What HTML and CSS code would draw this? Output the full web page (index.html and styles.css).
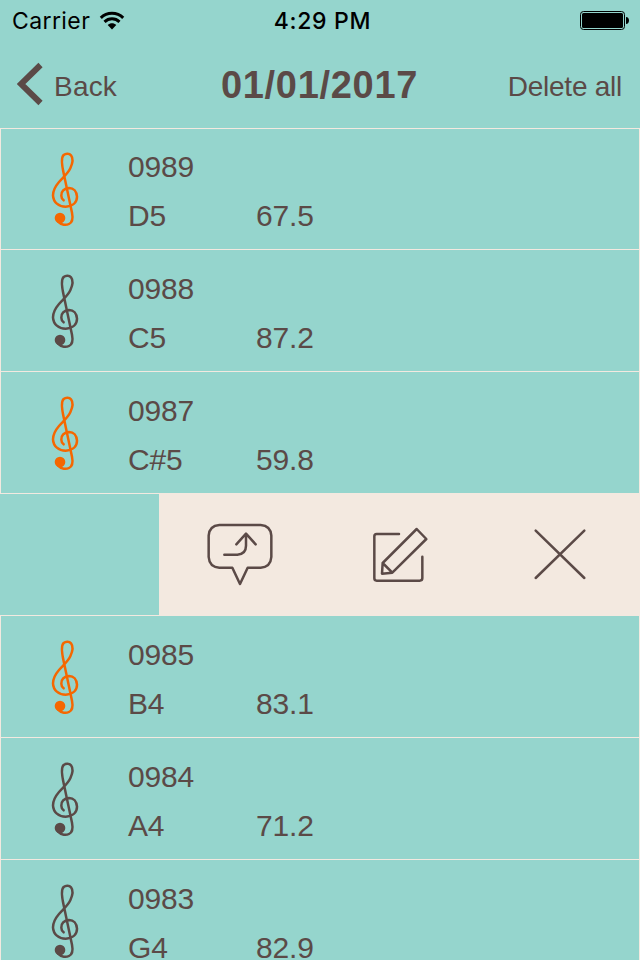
FILE: index.html
```html
<!DOCTYPE html>
<html lang="en">
<head>
  <meta charset="UTF-8" />
  <meta name="viewport" content="width=device-width, initial-scale=1.0" />
  <title>01/01/2017</title>
  <link rel="stylesheet" href="styles.css">
</head>
<body>
  <!-- shared treble clef -->
  <svg class="defs" width="0" height="0">
    <symbol id="clef" viewBox="0 0 150 270">
      <path d="M55 231 C64 241 79 241 87 237 C99 231 99 218 96 203 L71 85 C65 58 63 37 71 30 C77 25 88 25 93 31 C100 40 97 57 91 70 C83 87 69 97 57 111 C45 125 39 135 39 151 C40 172 56 185 77 185 C99 184 111 172 111 155 C110 139 101 129 87 129 C72 130 63 140 64 152 C64 159 67 163 71 166" fill="none" stroke="currentColor" stroke-width="7.5" stroke-linecap="round" stroke-linejoin="round"/>
      <circle cx="60" cy="219" r="16" fill="currentColor"/>
    </symbol>
  </svg>

  <div class="status">
    <div class="carrier">
      <span>Carrier</span>
      <svg class="wifi" width="26" height="20" viewBox="0 0 26 20">
        <path d="M1.8 6.8 C8 .8 18 .8 24.2 6.8 M5.5 10.8 C9.8 6.8 16.2 6.8 20.5 10.8" fill="none" stroke="#000" stroke-width="3"/>
        <path d="M8.7 14 C11.2 11.7 14.8 11.7 17.3 14 L13 18.5 Z"/>
      </svg>
    </div>
    <span class="time">4:29 PM</span>
    <svg class="battery" width="49" height="20" viewBox="0 0 49 20">
      <rect x=".5" y=".5" width="44" height="18" rx="3" fill="none" stroke="#000"/>
      <rect x="2" y="2" width="41" height="15" rx="1.5"/>
      <path d="M46 6 C50 6 50 13 46 13 Z"/>
    </svg>
  </div>

  <header class="nav">
    <a class="back">
      <svg width="26" height="44" viewBox="0 0 26 44">
        <path d="M23.5 3 L4 22 L23.5 41" fill="none" stroke="currentColor" stroke-width="6"/>
      </svg>
      <span>Back</span>
    </a>
    <h1 class="title">01/01/2017</h1>
    <a class="delete">Delete all</a>
  </header>

  <main class="list">
    <div class="row">
      <svg class="clef hot"><use href="#clef"/></svg>
      <div class="info"><span class="num">0989</span><span>D5</span><span>67.5</span></div>
    </div>
    <div class="row">
      <svg class="clef"><use href="#clef"/></svg>
      <div class="info"><span class="num">0988</span><span>C5</span><span>87.2</span></div>
    </div>
    <div class="row">
      <svg class="clef hot"><use href="#clef"/></svg>
      <div class="info"><span class="num">0987</span><span>C#5</span><span>59.8</span></div>
    </div>
    <!-- row swiped open -->
    <div class="row swiped">
      <div class="actions">
        <svg width="80" height="80" viewBox="0 0 240 240">
          <path d="M58 30 H182 Q212 32 214 62 V126 Q212 156 182 158 H143 L120 207 L97 158 H58 Q28 156 26 126 V62 Q28 32 58 30 Z M73 119 H112 Q138 117 138 92 V56 M109 88 L138 56 L167 88"/>
        </svg>
        <svg width="80" height="80" viewBox="0 0 240 240">
          <path d="M117 57 H50 Q43 57 43 64 V190 Q43 197 50 197 H179 Q187 197 187 190 V125 M170 42 L199 72 L97 173 L66 176 L68 144 Z M68 144 L97 173"/>
        </svg>
        <svg width="80" height="80" viewBox="0 0 240 240">
          <path d="M47 47 L193 189 M193 47 L47 189"/>
        </svg>
      </div>
    </div>
    <div class="row">
      <svg class="clef hot"><use href="#clef"/></svg>
      <div class="info"><span class="num">0985</span><span>B4</span><span>83.1</span></div>
    </div>
    <div class="row">
      <svg class="clef"><use href="#clef"/></svg>
      <div class="info"><span class="num">0984</span><span>A4</span><span>71.2</span></div>
    </div>
    <div class="row">
      <svg class="clef"><use href="#clef"/></svg>
      <div class="info"><span class="num">0983</span><span>G4</span><span>82.9</span></div>
    </div>
  </main>
</body>
</html>
```

FILE: styles.css
```css
* { box-sizing: border-box; }
body {
  margin: 0;
  height: 960px;
  overflow: hidden;
  background: #95d5cd;
  color: #5b4a47;
  font-family: "Liberation Sans", Arial, sans-serif;
}
svg { display: block; flex: none; }
.defs { display: none; }

.status {
  height: 40px;
  padding: 1px 11px 0 12px;
  display: grid;
  grid-template-columns: 1fr auto 1fr;
  align-items: center;
  color: #000;
  font: 400 23px/39px Inter, sans-serif;
}
.carrier { display: flex; align-items: center; gap: 9px; letter-spacing: .4px; }
.carrier span, .time { padding-top: 1px; }
.time { font-weight: 500; letter-spacing: .7px; padding-left: 4px; }
.battery { justify-self: end; }

.nav {
  height: 88px;
  padding: 0 18px 0 17px;
  display: grid;
  grid-template-columns: 1fr auto 1fr;
  align-items: center;
  font-size: 28px;
}
.back { display: flex; align-items: center; gap: 11px; padding-top: 5px; letter-spacing: .2px; }
.back svg { margin-top: -6px; }
.title { margin: 0; font-size: 38px; line-height: 44px; letter-spacing: .7px; padding-top: 1px; }
.delete { justify-self: end; letter-spacing: -.25px; padding-top: 5px; }

.list { border-top: 1px solid #f3e9e0; }
.row {
  height: 122px;
  display: flex;
  border: solid #f3e9e0;
  border-width: 0 1px 1px;
}
.row:first-child { height: 121px; }
.row:first-child .clef { margin-top: 16px; }
.row:first-child .info { padding-top: 13px; }
.clef { width: 50px; height: 90px; margin: 17px 38px 0 39px; }
.hot { color: #f56700; }
.info {
  display: grid;
  grid-template-columns: 128px auto;
  grid-template-rows: 49px 49px;
  align-content: start;
  padding-top: 14px;
  font-size: 30px;
  line-height: 49px;
  letter-spacing: -.15px;
}
.num { grid-column: 1 / -1; }

.swiped { border-left: 0; border-right: 0; justify-content: flex-end; }
.actions {
  width: 481px;
  padding: 0 40px 0 41px;
  display: flex;
  justify-content: space-between;
  align-items: center;
  background: #f3e9e0;
}
.actions path { fill: none; stroke: #5b4a47; stroke-width: 7.5; stroke-linejoin: round; stroke-linecap: round; }
```
